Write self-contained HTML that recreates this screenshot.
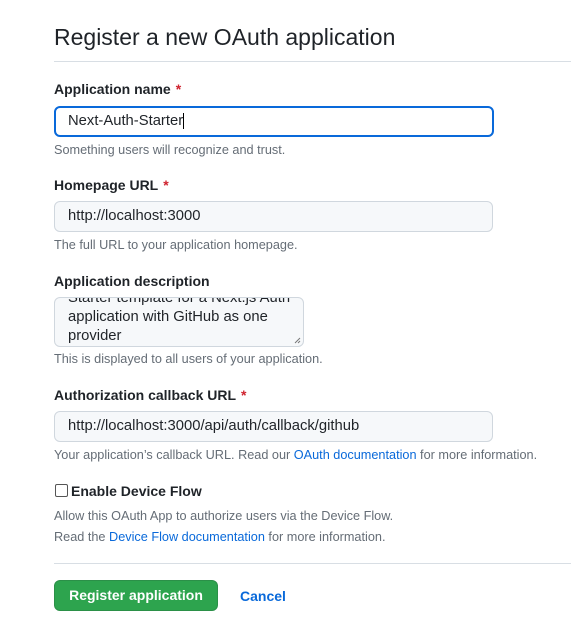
<!DOCTYPE html>
<html><head><style>
body{margin:0;width:571px;height:642px;background:#fff;font-family:"Liberation Sans",Arial,sans-serif;color:#1f2328;position:relative;overflow:hidden}
.a{position:absolute;white-space:nowrap}
h1{position:absolute;left:54px;top:21px;margin:0;font-size:23px;font-weight:400;line-height:32px}
.hr{position:absolute;left:54px;right:0;height:1px;background:#d8dee4}
.lbl{font-size:14px;font-weight:700;line-height:20px}
.lbl b{color:#cf222e;margin-left:5px}
.hint{font-size:12.7px;color:#656d76;line-height:16px}
.in{position:absolute;left:54px;width:437px;height:29px;border:1px solid #d0d7de;border-radius:6px;background:#f6f8fa;box-sizing:content-box;font-size:14.8px;line-height:29px;padding-left:0}
.in span{position:absolute;left:13px;top:0}
a{color:#0969da;text-decoration:none}
</style></head><body>
<h1>Register a new OAuth application</h1>
<div class="hr" style="top:61px"></div>

<div class="a lbl" style="left:54px;top:79px">Application name<b>*</b></div>
<div class="in" style="top:106px;height:27px;width:436px;border:2px solid #0969da;background:#fff;line-height:27px"><span style="left:12px">Next-Auth-Starter<span style="position:static;border-right:1px solid #000;margin-left:0"></span></span></div>
<div class="a hint" style="left:54px;top:142px">Something users will recognize and trust.</div>

<div class="a lbl" style="left:54px;top:175px">Homepage URL<b>*</b></div>
<div class="in" style="top:201px"><span>http://localhost:3000</span></div>
<div class="a hint" style="left:54px;top:237px">The full URL to your application homepage.</div>

<div class="a lbl" style="left:54px;top:271px">Application description</div>
<div style="position:absolute;left:54px;top:297px;width:248px;height:48px;border:1px solid #d0d7de;border-radius:6px;background:#f6f8fa;overflow:hidden;font-size:14.8px;line-height:19px">
<div style="position:absolute;left:13px;top:-9px;white-space:nowrap">Starter template for a Next.js Auth<br>application with GitHub as one<br>provider</div>
<svg style="position:absolute;right:2px;bottom:2px" width="7" height="7"><path d="M1 6L6 1M4 6L6 4" stroke="#777" stroke-width="1"/></svg>
</div>
<div class="a hint" style="left:54px;top:351px">This is displayed to all users of your application.</div>

<div class="a lbl" style="left:54px;top:385px">Authorization callback URL<b>*</b></div>
<div class="in" style="top:411px"><span>http://localhost:3000/api/auth/callback/github</span></div>
<div class="a hint" style="left:54px;top:447px">Your application’s callback URL. Read our <a>OAuth documentation</a> for more information.</div>

<div style="position:absolute;left:55px;top:484px;width:11px;height:11px;border:1px solid #555;border-radius:2px;background:#fff"></div>
<div class="a lbl" style="left:71px;top:481px">Enable Device Flow</div>
<div class="a hint" style="left:54px;top:508px">Allow this OAuth App to authorize users via the Device Flow.</div>
<div class="a hint" style="left:54px;top:529px">Read the <a>Device Flow documentation</a> for more information.</div>

<div class="hr" style="top:563px"></div>
<div style="position:absolute;left:54px;top:580px;width:164px;height:31px;background:#2da44e;border:1px solid rgba(31,35,40,.15);box-sizing:border-box;border-radius:6px;color:#fff;font-size:14px;font-weight:700;line-height:29px;text-align:center">Register application</div>
<div class="a" style="left:240px;top:587px;font-size:14px;font-weight:700;color:#0969da;line-height:18px">Cancel</div>
</body></html>
